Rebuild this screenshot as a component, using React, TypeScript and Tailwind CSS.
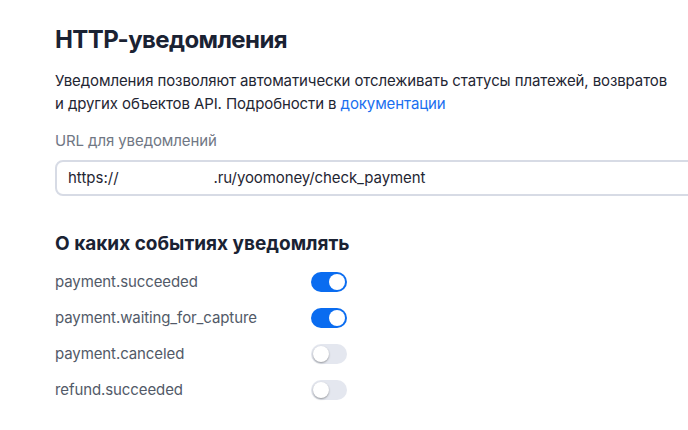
import React from "react";

function Toggle({ on }: { on: boolean }) {
  return (
    <div
      className={
        "relative w-[36px] h-[20px] rounded-full " +
        (on ? "bg-[#0a6cf0]" : "bg-[#e4e7ef]")
      }
    >
      <div
        className={
          "absolute top-[2px] w-[16px] h-[16px] rounded-full bg-white " +
          (on ? "right-[2px]" : "left-[2px] shadow-[0_1px_2px_rgba(0,0,0,0.35)]")
        }
      />
    </div>
  );
}

const events: [string, boolean][] = [
  ["payment.succeeded", true],
  ["payment.waiting_for_capture", true],
  ["payment.canceled", false],
  ["refund.succeeded", false],
];

export default function App() {
  return (
    <div
      className="w-[688px] h-[430px] bg-white overflow-hidden pl-[55px] pt-[24px]"
      style={{ fontFamily: "Inter, 'Noto Sans', sans-serif" }}
    >
      <h1 className="text-[24px] leading-[32px] font-bold text-[#1a2233] tracking-[-0.6px]">
        HTTP-уведомления
      </h1>
      <p className="mt-[13px] text-[15px] leading-[23px] text-[#1f2633] w-[640px] tracking-[-0.1px]">
        Уведомления позволяют автоматически отслеживать статусы платежей, возвратов
        <br />и других объектов API. Подробности в{" "}
        <span className="text-[#1a6ff0]">документации</span>
      </p>
      <div className="mt-[16px] text-[15px] leading-[20px] text-[#707784] tracking-[-0.1px]">
        URL для уведомлений
      </div>
      <div className="mt-[9px] h-[36px] w-[700px] border-2 border-[#d7dbe5] rounded-[8px] flex items-center pl-[11px] text-[15px] text-[#1f2633]">
        <span>https://</span>
        <span className="ml-[95px] tracking-[-0.1px]">.ru/yoomoney/check_payment</span>
      </div>
      <h2 className="mt-[35px] text-[19px] leading-[26px] font-bold text-[#1a2233]">
        О каких событиях уведомлять
      </h2>
      <div className="mt-[7px] flex flex-col">
        {events.map(([name, on]) => (
          <div key={name} className="h-[36px] flex items-center w-[292px] justify-between">
            <span className="text-[15px] text-[#525a68] tracking-[-0.1px]">{name}</span>
            <Toggle on={on} />
          </div>
        ))}
      </div>
    </div>
  );
}
